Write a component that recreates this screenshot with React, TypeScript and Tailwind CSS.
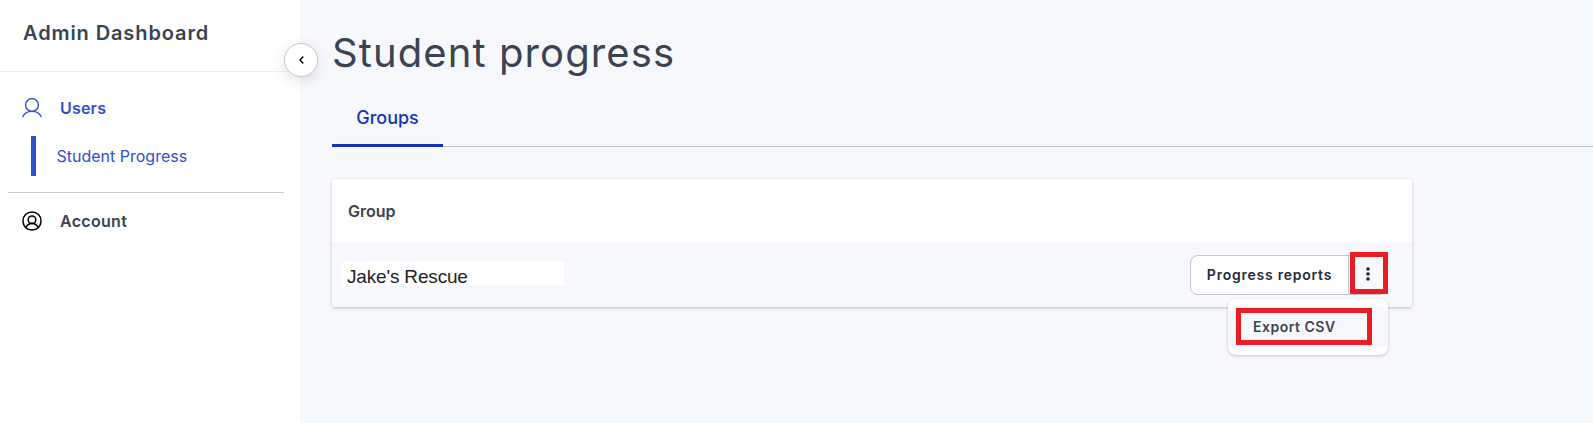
import { useState } from "react";

type IconProps = {
  className?: string;
};

function UserIcon({ className }: IconProps) {
  return (
    <svg
      className={className}
      viewBox="0 0 20 20"
      fill="none"
      stroke="currentColor"
      strokeWidth="1.4"
      aria-hidden="true"
    >
      <circle cx="10" cy="7" r="6.4" />
      <path d="M0.6 19C2.200 15.500 5.800 13.400 10 13.400s7.800 2.100 9.400 5.600" />
    </svg>
  );
}

function AccountIcon({ className }: IconProps) {
  return (
    <svg
      className={className}
      viewBox="0 0 20 20"
      fill="none"
      stroke="currentColor"
      strokeWidth="1.5"
      aria-hidden="true"
    >
      <circle cx="10" cy="10" r="9.1" />
      <circle cx="10" cy="8.8" r="3.8" />
      <path d="M4 16.6c.9-2.5 3.2-4 6-4s5.1 1.5 6 4" />
    </svg>
  );
}

function Sidebar() {
  return (
    <aside className="relative w-[300px] shrink-0 bg-white">
      <div className="h-[72px] border-b border-[#f0f0f2] pl-[23px] pt-[18px]">
        <h2 className="text-[20px] leading-[30px] font-semibold tracking-[0.9px] whitespace-nowrap">
          Admin Dashboard
        </h2>
      </div>
      <button
        type="button"
        aria-label="Collapse sidebar"
        className="absolute left-[284px] top-[43px] z-10 flex h-[34px] w-[34px] items-center justify-center rounded-full border border-[#c4c5d0] bg-white text-black shadow-[0_4px_14px_rgba(60,60,80,0.14)]"
      >
        <svg className="h-2 w-[5px]" viewBox="0 0 5 8" fill="none" aria-hidden="true">
          <path d="M4.3 0.5 1 4l3.3 3.5" stroke="currentColor" strokeWidth="1.4" />
        </svg>
      </button>
      <nav className="pt-4 text-base">
        <a className="flex h-10 items-center pl-[22px] font-semibold text-[#2f50ce]">
          <UserIcon className="h-5 w-5" />
          <span className="ml-[18px] tracking-[0.2px]">Users</span>
        </a>
        <a className="mt-2 ml-[31px] flex h-10 items-center border-l-[5px] border-[#2f50ce] pl-[20.5px] text-[#2f50ce]">
          Student Progress
        </a>
        <hr className="mt-4 ml-2 mr-4 border-[#cccccf]" />
        <a className="mt-2 flex h-10 items-center pl-[22px] font-semibold">
          <AccountIcon className="h-5 w-5 text-black" />
          <span className="ml-[18px] tracking-[0.3px]">Account</span>
        </a>
      </nav>
    </aside>
  );
}

function ReportActions() {
  const [open, setOpen] = useState(true);

  return (
    <div className="relative mr-6 flex h-10 w-[198px] rounded-[8px] border border-[#c4c5cd] bg-white">
      <button
        type="button"
        className="w-[158px] border-r border-[#c4c5cd] text-sm font-semibold tracking-[0.76px] whitespace-nowrap text-[#252b37]"
      >
        Progress reports
      </button>
      <button
        type="button"
        aria-label="More actions"
        className="absolute -right-px -top-1 flex h-[42px] w-[38px] items-center justify-center border-5 border-[#ed1c24] bg-[#f7f8fc] text-[#1b2430]"
        onClick={() => setOpen(!open)}
      >
        <svg className="mt-[3px] mr-0.5 h-4 w-4" viewBox="0 0 16 16" fill="currentColor" aria-hidden="true">
          <circle cx="8" cy="3" r="1.8" />
          <circle cx="8" cy="8" r="1.8" />
          <circle cx="8" cy="13" r="1.8" />
        </svg>
      </button>
      {open && (
        <div className="absolute -right-px top-[43px] z-10 h-14 w-40 rounded-[8px] bg-white py-2 shadow-[0_1px_3px_rgba(40,45,60,0.25)]">
          <div className="h-10 bg-[#f7f8fc] pl-2 pt-px">
            <button
              type="button"
              className="flex h-[37px] w-[136px] items-center border-5 border-[#ed1c24] pl-3 pt-0.5 text-sm font-semibold tracking-[0.5px]"
            >
              Export CSV
            </button>
          </div>
        </div>
      )}
    </div>
  );
}

export default function App() {
  return (
    <div className="flex h-[423px] w-full overflow-hidden bg-[#f7f8fc] font-['Inter','Liberation_Sans',sans-serif] text-[#3a4352]">
      <Sidebar />
      <main className="min-w-0 flex-1 pl-8">
        <h1 className="pt-[23px] text-[40px] leading-[60px] tracking-[1.1px] whitespace-nowrap">
          Student progress
        </h1>
        <div className="mt-[11px] h-[53px] border-b border-[#bfc1ca]">
          <button
            type="button"
            className="h-[53px] w-[111px] border-b-3 border-[#1034b4] pb-1 text-[18px] font-medium text-[#1034b4]"
          >
            Groups
          </button>
        </div>
        <section className="mt-8 w-[1080px] rounded-[3px] bg-white shadow-[0_1px_3px_rgba(40,45,60,0.3)]">
          <div className="flex h-[63px] items-center px-4 text-base font-semibold">
            Group
          </div>
          <div className="flex h-[65px] items-center justify-between rounded-b-[3px] bg-[#f7f8fc]">
            <div className="-mt-px ml-[10px] flex h-6 w-[222px] items-center bg-white pl-[5px] pt-[7px] font-['Liberation_Sans',Arial,sans-serif] text-[19px] tracking-[-0.17px] text-[#1e1e1e]">
              Jake's Rescue
            </div>
            <ReportActions />
          </div>
        </section>
      </main>
    </div>
  );
}
